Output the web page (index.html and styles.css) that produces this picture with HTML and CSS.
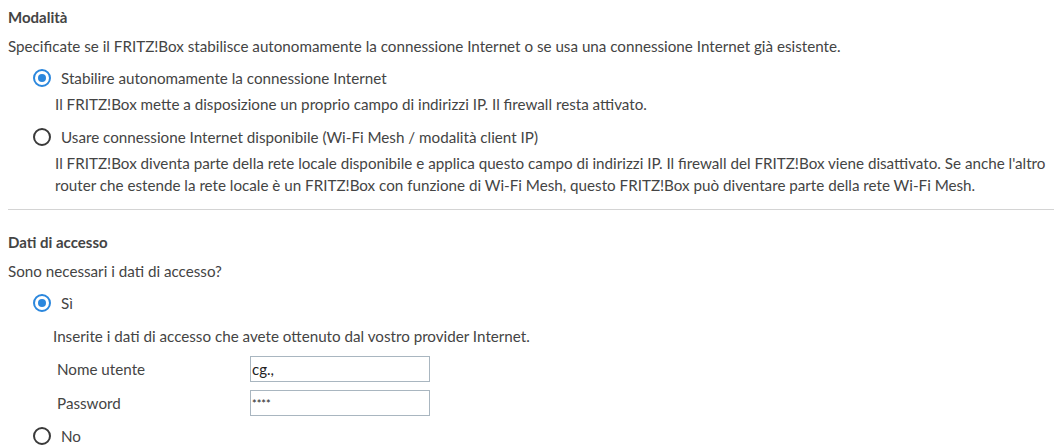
FILE: index.html
```html
<!DOCTYPE html>
<html lang="it">
<head>
    <meta charset="UTF-8">
    <title>Accesso Internet</title>
    <link rel="stylesheet" href="styles.css">
</head>
<body>
    <div class="section">
        <h2>Modalità</h2>
        <p class="desc">Specificate se il FRITZ!Box stabilisce autonomamente la connessione Internet o se usa una connessione Internet già esistente.</p>
        <label class="option first">
            <input type="radio" name="mode" checked>
            <span class="radio"></span>
            <span>Stabilire autonomamente la connessione Internet</span>
        </label>
        <p class="hint">Il FRITZ!Box mette a disposizione un proprio campo di indirizzi IP. Il firewall resta attivato.</p>
        <label class="option">
            <input type="radio" name="mode">
            <span class="radio"></span>
            <span>Usare connessione Internet disponibile (Wi-Fi Mesh / modalità client IP)</span>
        </label>
        <p class="hint">Il FRITZ!Box diventa parte della rete locale disponibile e applica questo campo di indirizzi IP. Il firewall del FRITZ!Box viene disattivato. Se anche l'altro router che estende la rete locale è un FRITZ!Box con funzione di Wi-Fi Mesh, questo FRITZ!Box può diventare parte della rete Wi-Fi Mesh.</p>
    </div>

    <div class="section">
        <h2>Dati di accesso</h2>
        <p class="desc">Sono necessari i dati di accesso?</p>
        <label class="option first">
            <input type="radio" name="login" checked>
            <span class="radio"></span>
            <span>Sì</span>
        </label>
        <div class="sub">
            <p class="note">Inserite i dati di accesso che avete ottenuto dal vostro provider Internet.</p>
            <div class="field">
                <label for="user">Nome utente</label>
                <input type="text" id="user" value="cg.,">
            </div>
            <div class="field">
                <label for="pass">Password</label>
                <input type="text" id="pass" class="stars" value="****">
            </div>
        </div>
        <label class="option last">
            <input type="radio" name="login">
            <span class="radio"></span>
            <span>No</span>
        </label>
    </div>
</body>
</html>
```

FILE: styles.css
```css
body {
    margin: 0;
    font-family: Lato, sans-serif;
    font-size: 15.2px;
    line-height: 22px;
    color: #444;
    background: #fff;
}
.section {
    margin: 0 6px 0 8px;
    padding-top: 6px;
}
.section + .section {
    border-top: 1px solid #d4d4d4;
    margin-top: 13px;
    padding-top: 21px;
}
h2 {
    margin: 0;
    font-size: 15px;
    font-weight: 700;
    line-height: 22px;
    color: #444;
}
p {
    margin: 0;
}
.desc {
    margin-top: 7px;
}
.option {
    display: flex;
    align-items: center;
    gap: 10px;
    margin: 11px 0 0 25px;
    cursor: pointer;
}
.option.first {
    margin-top: 10px;
}
.option input {
    display: none;
}
.radio {
    width: 14px;
    height: 14px;
    border: 2px solid #3a3a3a;
    border-radius: 50%;
    position: relative;
    flex: none;
}
.option input:checked + .radio {
    border-color: #2b87dd;
}
.option input:checked + .radio::after {
    content: '';
    position: absolute;
    top: 3px;
    left: 3px;
    width: 8px;
    height: 8px;
    border-radius: 50%;
    background: #2b87dd;
}
.hint {
    margin: 4px 0 0 47px;
}
.sub {
    margin-left: 45px;
    padding-top: 11px;
}
.field {
    display: flex;
    align-items: center;
    margin-top: 8px;
    padding-left: 4px;
}
.note + .field {
    margin-top: 9px;
}
.field label {
    width: 193px;
}
.field input {
    width: 174px;
    height: 20px;
    padding: 2px 3px 2px 1px;
    border: 1px solid #a9b6c0;
    font-family: Lato, sans-serif;
    font-size: 15px;
    color: #222;
    margin: 0;
}
.field input.stars {
    font-size: 11px;
}
.option.last {
    margin-top: 9px;
}
```
